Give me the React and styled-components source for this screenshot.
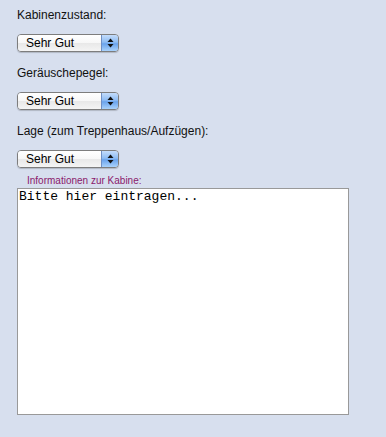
import React from 'react';
import styled, { createGlobalStyle } from 'styled-components';

const GlobalStyle = createGlobalStyle`
  html, body {
    margin: 0;
    padding: 0;
    background: #d7dfee;
  }
`;

const Page = styled.div`
  width: 386px;
  height: 437px;
  box-sizing: border-box;
  padding: 8px 0 0 17px;
  background: #d7dfee;
  font-family: "Liberation Sans", Arial, sans-serif;
`;

const Field = styled.div`
  margin-bottom: 14px;
`;

const Label = styled.label`
  display: block;
  font-size: 12px;
  line-height: 14px;
  color: #111;
  margin-bottom: 12px;
`;

const PopUp = styled.div`
  display: flex;
  width: 102px;
  height: 18px;
  box-sizing: border-box;
  border: 1px solid #7d7d7d;
  border-radius: 4px;
  overflow: hidden;
  box-shadow: 0 1px 1px rgba(0, 0, 0, 0.18);
`;

const Select = styled.select`
  appearance: none;
  -webkit-appearance: none;
  flex: 1;
  min-width: 0;
  border: none;
  outline: none;
  margin: 0;
  padding: 0 0 0 8px;
  height: 16px;
  font-family: "Liberation Sans", Arial, sans-serif;
  font-size: 12px;
  line-height: 16px;
  color: #000;
  background: linear-gradient(#ffffff 0%, #f7f7f7 50%, #e8e8e8 51%, #f4f4f4 100%);
`;

const Stepper = styled.span`
  width: 16px;
  display: flex;
  align-items: center;
  justify-content: center;
  border-left: 1px solid #6f8fc4;
  background: linear-gradient(#c4dcfb 0%, #8ebcf3 45%, #6aa3ec 55%, #a9d2fb 100%);
`;

const Info = styled.div`
  margin-top: -7px;
`;

const SmallLabel = styled.label`
  display: block;
  font-size: 10px;
  line-height: 12px;
  color: #8b1a6c;
  padding-left: 10px;
  margin-bottom: 1px;
`;

const Notes = styled.textarea`
  display: block;
  width: 332px;
  height: 227px;
  box-sizing: border-box;
  margin: 0;
  padding: 0 1px;
  border: 1px solid #999;
  background: #fff;
  resize: none;
  outline: none;
  font-family: "Liberation Mono", "Courier New", monospace;
  font-size: 13px;
  line-height: 15px;
  color: #000;
`;

const Arrows = () => (
  <svg width="7" height="10" viewBox="0 0 7 10">
    <path d="M3.5 0.5 L6.5 4 H0.5 Z" fill="#111" />
    <path d="M0.5 6 H6.5 L3.5 9.5 Z" fill="#111" />
  </svg>
);

const Rating = ({ label }) => (
  <Field>
    <Label>{label}</Label>
    <PopUp>
      <Select defaultValue="sehr-gut">
        <option value="sehr-gut">Sehr Gut</option>
        <option value="gut">Gut</option>
        <option value="mittel">Mittel</option>
        <option value="schlecht">Schlecht</option>
      </Select>
      <Stepper><Arrows /></Stepper>
    </PopUp>
  </Field>
);

const App = () => (
  <Page>
    <GlobalStyle />
    <Rating label="Kabinenzustand:" />
    <Rating label="Geräuschepegel:" />
    <Rating label="Lage (zum Treppenhaus/Aufzügen):" />
    <Info>
      <SmallLabel>Informationen zur Kabine:</SmallLabel>
      <Notes defaultValue="Bitte hier eintragen..." />
    </Info>
  </Page>
);

export default App;
